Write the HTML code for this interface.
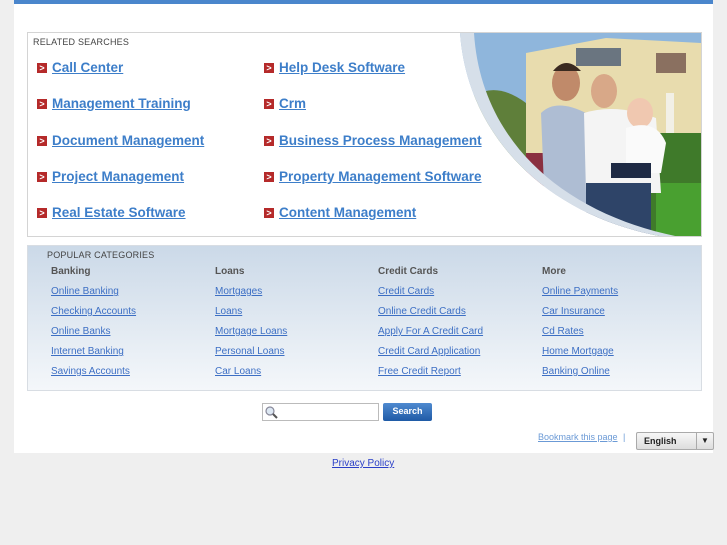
<!DOCTYPE html>
<html><head><style>
body{margin:0;background:#efefef;font-family:"Liberation Sans",sans-serif;width:727px;height:545px;position:relative;overflow:hidden}
#w{position:absolute;left:14px;top:0;width:699px;height:453px;background:#fff}
#bar{position:absolute;left:14px;top:0;width:699px;height:4px;background:#4a86cc}
#rel{position:absolute;left:27px;top:32px;width:673px;height:203px;border:1px solid #d4d4d4;background:#fff;overflow:hidden}
.h{position:absolute;font-size:9px;color:#444;letter-spacing:.2px}
.rl{position:absolute;font-size:13.5px;font-weight:bold;color:#3d7ec9;text-decoration:underline}
.rl i{position:absolute;left:-15px;top:3px;width:10px;height:10px;background:#b52a2a;color:#fff;font-size:9px;font-style:normal;line-height:10px;text-align:center;text-decoration:none}
#pop{position:absolute;left:27px;top:245px;width:673px;height:144px;border:1px solid #d8dde3;background:linear-gradient(#cbd9e8,#f4f7fa)}
.ct{position:absolute;font-size:10px;font-weight:bold;color:#555}
.pl{position:absolute;font-size:10px;color:#3d6fc4;text-decoration:underline}
</style></head><body>
<div id="w"></div><div id="bar"></div>
<div id="rel">
<div class="h" style="left:5px;top:4px">RELATED SEARCHES</div>
<svg style="position:absolute;left:428px;top:0" width="245" height="203">
<rect width="245" height="203" fill="#8fb6dc"/>
<path d="M0 80 Q30 40 70 70 L70 203 H0Z" fill="#5f7f3a"/>
<rect x="70" y="100" width="40" height="100" fill="#8a3040"/>
<path d="M70 20 L150 5 L245 10 V120 L70 120Z" fill="#e8dcae"/>
<rect x="120" y="15" width="45" height="18" fill="#6a7580"/>
<rect x="200" y="20" width="30" height="20" fill="#8a7060"/>
<rect x="210" y="60" width="8" height="50" fill="#f2f0e6"/>
<rect x="190" y="100" width="55" height="103" fill="#3f7a2a"/>
<rect x="200" y="150" width="45" height="53" fill="#49a030"/>
<path d="M85 80 Q100 65 130 80 L135 203 H90Z" fill="#aebdd3"/>
<ellipse cx="110" cy="50" rx="14" ry="18" fill="#c08a6a"/>
<path d="M97 38 Q110 22 125 38 Z" fill="#3a2a20"/>
<path d="M128 80 Q160 70 200 85 L205 160 H130Z" fill="#f4f4f4"/>
<ellipse cx="148" cy="58" rx="13" ry="17" fill="#d8a888"/>
<ellipse cx="184" cy="80" rx="13" ry="15" fill="#f0c8b0"/>
<path d="M170 95 Q200 85 210 110 L205 140 H170Z" fill="#fafafa"/>
<rect x="155" y="130" width="40" height="15" fill="#1e2a44"/>
<rect x="130" y="150" width="65" height="53" fill="#2e4468"/>
<path d="M0 0 H4 C12 110 100 190 222 206 V203 H0Z" fill="#fff"/>
<path d="M4 0 C12 110 100 190 222 206 L235 206 C110 185 25 110 18 0Z" fill="#d6dfe9"/>
</svg>
<a class="rl" style="left:24px;top:27px"><i>&gt;</i>Call Center</a>
<a class="rl" style="left:24px;top:63px"><i>&gt;</i>Management Training</a>
<a class="rl" style="left:24px;top:100px"><i>&gt;</i>Document Management</a>
<a class="rl" style="left:24px;top:136px"><i>&gt;</i>Project Management</a>
<a class="rl" style="left:24px;top:172px"><i>&gt;</i>Real Estate Software</a>
<a class="rl" style="left:251px;top:27px"><i>&gt;</i>Help Desk Software</a>
<a class="rl" style="left:251px;top:63px"><i>&gt;</i>Crm</a>
<a class="rl" style="left:251px;top:100px"><i>&gt;</i>Business Process Management</a>
<a class="rl" style="left:251px;top:136px"><i>&gt;</i>Property Management Software</a>
<a class="rl" style="left:251px;top:172px"><i>&gt;</i>Content Management</a>
</div>
<div id="pop">
<div class="h" style="left:19px;top:4px">POPULAR CATEGORIES</div>
<div class="ct" style="left:23px;top:20px">Banking</div>
<div class="ct" style="left:187px;top:20px">Loans</div>
<div class="ct" style="left:350px;top:20px">Credit Cards</div>
<div class="ct" style="left:514px;top:20px">More</div>
<a class="pl" style="left:23px;top:40px">Online Banking</a><a class="pl" style="left:23px;top:60px">Checking Accounts</a><a class="pl" style="left:23px;top:80px">Online Banks</a><a class="pl" style="left:23px;top:100px">Internet Banking</a><a class="pl" style="left:23px;top:120px">Savings Accounts</a>
<a class="pl" style="left:187px;top:40px">Mortgages</a><a class="pl" style="left:187px;top:60px">Loans</a><a class="pl" style="left:187px;top:80px">Mortgage Loans</a><a class="pl" style="left:187px;top:100px">Personal Loans</a><a class="pl" style="left:187px;top:120px">Car Loans</a>
<a class="pl" style="left:350px;top:40px">Credit Cards</a><a class="pl" style="left:350px;top:60px">Online Credit Cards</a><a class="pl" style="left:350px;top:80px">Apply For A Credit Card</a><a class="pl" style="left:350px;top:100px">Credit Card Application</a><a class="pl" style="left:350px;top:120px">Free Credit Report</a>
<a class="pl" style="left:514px;top:40px">Online Payments</a><a class="pl" style="left:514px;top:60px">Car Insurance</a><a class="pl" style="left:514px;top:80px">Cd Rates</a><a class="pl" style="left:514px;top:100px">Home Mortgage</a><a class="pl" style="left:514px;top:120px">Banking Online</a>
</div>
<div style="position:absolute;left:262px;top:403px;width:115px;height:16px;border:1px solid #bbb;background:#fff"><svg width="16" height="16"><circle cx="7" cy="7" r="4" fill="#dde8f3" stroke="#889" stroke-width="1.2"/><path d="M10 10 L14 14" stroke="#555" stroke-width="2"/></svg></div>
<div style="position:absolute;left:383px;top:403px;width:49px;height:18px;border-radius:2px;background:linear-gradient(#4f8ad0,#1f5aa6);color:#fff;font-size:9px;font-weight:bold;text-align:center;line-height:17px">Search</div>
<a style="position:absolute;left:538px;top:432px;font-size:9px;color:#6b9ad6;text-decoration:underline">Bookmark this page</a><span style="position:absolute;left:623px;top:432px;font-size:9px;color:#6b9ad6">|</span>
<div style="position:absolute;left:636px;top:432px;width:76px;height:16px;border:1px solid #aaa;border-radius:2px;background:linear-gradient(#f7f7f7,#ddd);font-size:9px;font-weight:bold;line-height:16px;color:#222"><span style="margin-left:7px">English</span><span style="position:absolute;right:0;top:0;width:16px;height:16px;border-left:1px solid #aaa;text-align:center;font-size:8px">▼</span></div>
<a style="position:absolute;left:332px;top:458px;font-size:10px;color:#2a3fc8;text-decoration:underline">Privacy Policy</a>
</body></html>
